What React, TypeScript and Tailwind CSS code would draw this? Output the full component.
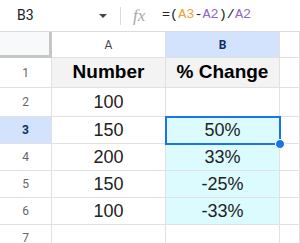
import { Fragment, type ReactNode } from "react";

const rows: { n: number; a: string; b: string }[] = [
    { n: 2, a: "100", b: "" },
    { n: 3, a: "150", b: "50%" },
    { n: 4, a: "200", b: "33%" },
    { n: 5, a: "150", b: "-25%" },
    { n: 6, a: "100", b: "-33%" },
    { n: 7, a: "", b: "" },
];

const cell = "flex items-center justify-center border-r border-b border-[#e1e1e1]";

const Cell = ({ className, children }: { className?: string; children?: ReactNode }) => (
    <div className={`${cell} ${className ?? ""}`}>{children}</div>
);

export default function App() {
    return (
        <div className="h-[243px] w-[300px] overflow-hidden bg-white font-['Liberation_Sans',Arial,sans-serif]">
            {/* formula bar */}
            <div className="flex h-[32px] items-center border-b border-[#dadce0]">
                <span className="ml-[17px] w-[80px] font-['Roboto',sans-serif] text-[14px] text-[#202124]">
                    B3
                </span>
                <span className="ml-[2px] h-0 w-0 border-x-[4px] border-t-[4px] border-x-transparent border-t-[#444]" />
                <span className="ml-[13px] h-[18px] w-px bg-[#dadce0]" />
                <span className="ml-[12px] w-[16px] font-['Liberation_Serif',serif] text-[17px] italic text-[#a8a8a8]">
                    fx
                </span>
                <span className="ml-[13px] font-['Liberation_Mono',monospace] text-[13.5px] text-[#202124]">
                    =(<span className="text-[#e8a33d]">A3</span>-
                    <span className="text-[#8e6bc9]">A2</span>)/
                    <span className="text-[#8e6bc9]">A2</span>
                </span>
            </div>

            <div className="relative grid grid-cols-[52px_114px_114px_1fr] grid-rows-[26px_30px_29px_repeat(5,27px)]">
                {/* column headers */}
                <div className="border-r-[3px] border-b-[3px] border-[#c4c7c5] bg-[#f8f9fa]" />
                <Cell className="bg-white font-['Roboto',sans-serif] text-[12px] text-[#444]">A</Cell>
                <Cell className="bg-[#d3e3fd] font-['Roboto',sans-serif] text-[12px] font-bold text-[#0b2e6b]">B</Cell>
                <Cell className="bg-white" />

                {/* header row */}
                <Cell className="font-['Roboto',sans-serif] text-[12px] text-[#666]">1</Cell>
                <Cell className="bg-[#f3f3f3] text-[19px] font-bold text-black">Number</Cell>
                <Cell className="bg-[#f3f3f3] text-[19px] font-bold text-black">% Change</Cell>
                <Cell />

                {rows.map((r) => (
                    <Fragment key={r.n}>
                        <Cell
                            className={
                                r.n === 3
                                    ? "bg-[#d3e3fd] font-['Roboto',sans-serif] text-[12px] font-bold text-[#0b2e6b]"
                                    : "font-['Roboto',sans-serif] text-[12px] text-[#666]"
                            }
                        >
                            {r.n}
                        </Cell>
                        <Cell className="text-[18px] text-[#222]">{r.a}</Cell>
                        <Cell
                            className={`text-[18px] text-[#222] ${r.n >= 3 && r.n <= 6 ? "bg-[#dcfbff]" : ""}`}
                        >
                            {r.b}
                        </Cell>
                        <Cell />
                    </Fragment>
                ))}

                {/* selection outline on B3 + fill handle */}
                <span className="pointer-events-none absolute top-[84px] left-[165px] h-[29px] w-[116px] border-2 border-[#1a73e8]" />
                <span className="absolute top-[107px] left-[275px] h-[10px] w-[10px] rounded-full border-[1.5px] border-white bg-[#1a73e8]" />
            </div>
        </div>
    );
}
